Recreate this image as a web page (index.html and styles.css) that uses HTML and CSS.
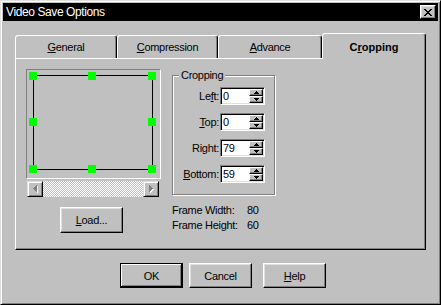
FILE: index.html
```html
<!DOCTYPE html>
<html>
<head>
<meta charset="utf-8">
<title>Video Save Options</title>
<link rel="stylesheet" href="styles.css">
</head>
<body>
<div class="window">
  <div class="titlebar">
    <span class="title">Video Save Options</span>
    <button class="close" aria-label="Close">
      <svg width="8" height="7" viewBox="0 0 8 7" shape-rendering="crispEdges"><path d="M0 0h2v1H0zM6 0h2v1H6zM1 1h2v1H1zM5 1h2v1H5zM2 2h4v1H2zM3 3h2v1H3zM2 4h4v1H2zM1 5h2v1H1zM5 5h2v1H5zM0 6h2v1H0zM6 6h2v1H6z" fill="#000"/></svg>
    </button>
  </div>
  <div class="content">
    <div class="tabs">
      <div class="tab"><u>G</u>eneral</div>
      <div class="tab"><u>C</u>ompression</div>
      <div class="tab"><u>A</u>dvance</div>
      <div class="tab active">C<u>r</u>opping</div>
    </div>
    <div class="panel">
      <div class="left-col">
        <div class="preview">
          <div class="crop"></div>
          <span class="handle h-tl"></span>
          <span class="handle h-tm"></span>
          <span class="handle h-tr"></span>
          <span class="handle h-ml"></span>
          <span class="handle h-mr"></span>
          <span class="handle h-bl"></span>
          <span class="handle h-bm"></span>
          <span class="handle h-br"></span>
        </div>
        <div class="hscroll">
          <div class="sbtn">
            <svg width="5" height="8" viewBox="0 0 5 8" shape-rendering="crispEdges"><path d="M1 4h1v1H1zM2 3h1v3H2zM3 2h1v5H3zM4 1h1v7H4z" fill="#fff"/><path d="M0 3h1v1H0zM1 2h1v3H1zM2 1h1v5H2zM3 0h1v7H3z" fill="#808080"/></svg>
          </div>
          <div class="track"></div>
          <div class="sbtn">
            <svg width="5" height="8" viewBox="0 0 5 8" shape-rendering="crispEdges"><path d="M1 1h1v7H1zM2 2h1v5H2zM3 3h1v3H3zM4 4h1v1H4z" fill="#fff"/><path d="M0 0h1v7H0zM1 1h1v5H1zM2 2h1v3H2zM3 3h1v1H3z" fill="#808080"/></svg>
          </div>
        </div>
        <button class="btn load"><u>L</u>oad...</button>
      </div>
      <div class="right-col">
        <div class="group">
          <span class="legend">Cropping</span>
          <div class="fields">
            <label class="flabel">Le<u>f</u>t:</label>
            <div class="edit"><span class="val">0</span><span class="spin"><span class="sp up"><svg width="5" height="3" viewBox="0 0 5 3" shape-rendering="crispEdges"><path d="M2 0h1v1H2zM1 1h3v1H1zM0 2h5v1H0z"/></svg></span><span class="sp dn"><svg width="5" height="3" viewBox="0 0 5 3" shape-rendering="crispEdges"><path d="M0 0h5v1H0zM1 1h3v1H1zM2 2h1v1H2z"/></svg></span></span></div>
            <label class="flabel"><u>T</u>op:</label>
            <div class="edit"><span class="val">0</span><span class="spin"><span class="sp up"><svg width="5" height="3" viewBox="0 0 5 3" shape-rendering="crispEdges"><path d="M2 0h1v1H2zM1 1h3v1H1zM0 2h5v1H0z"/></svg></span><span class="sp dn"><svg width="5" height="3" viewBox="0 0 5 3" shape-rendering="crispEdges"><path d="M0 0h5v1H0zM1 1h3v1H1zM2 2h1v1H2z"/></svg></span></span></div>
            <label class="flabel">Ri<u>g</u>ht:</label>
            <div class="edit"><span class="val">79</span><span class="spin"><span class="sp up"><svg width="5" height="3" viewBox="0 0 5 3" shape-rendering="crispEdges"><path d="M2 0h1v1H2zM1 1h3v1H1zM0 2h5v1H0z"/></svg></span><span class="sp dn"><svg width="5" height="3" viewBox="0 0 5 3" shape-rendering="crispEdges"><path d="M0 0h5v1H0zM1 1h3v1H1zM2 2h1v1H2z"/></svg></span></span></div>
            <label class="flabel"><u>B</u>ottom:</label>
            <div class="edit"><span class="val">59</span><span class="spin"><span class="sp up"><svg width="5" height="3" viewBox="0 0 5 3" shape-rendering="crispEdges"><path d="M2 0h1v1H2zM1 1h3v1H1zM0 2h5v1H0z"/></svg></span><span class="sp dn"><svg width="5" height="3" viewBox="0 0 5 3" shape-rendering="crispEdges"><path d="M0 0h5v1H0zM1 1h3v1H1zM2 2h1v1H2z"/></svg></span></span></div>
          </div>
        </div>
        <div class="info">
          <span>Frame Width:</span><span>80</span>
          <span>Frame Height:</span><span>60</span>
        </div>
      </div>
    </div>
    <div class="buttons">
      <button class="btn default">OK</button>
      <button class="btn cancel">Cancel</button>
      <button class="btn help"><u>H</u>elp</button>
    </div>
  </div>
</div>
</body>
</html>
```

FILE: styles.css
```css
* { box-sizing: border-box; }
html, body { margin: 0; padding: 0; }
body {
  width: 441px;
  height: 305px;
  overflow: hidden;
  background: #c0c0c0;
  font-family: "Liberation Sans", Arial, sans-serif;
  font-size: 11px;
  letter-spacing: -0.3px;
  color: #000;
}
u { text-decoration: underline; text-underline-offset: 1px; }

.window {
  width: 441px;
  height: 305px;
  background: #c0c0c0;
  border: 1px solid;
  border-color: #dfdfdf #000 #000 #dfdfdf;
  box-shadow: inset 1px 1px 0 #fff, inset -1px -1px 0 #808080;
  padding: 2px;
  display: flex;
  flex-direction: column;
}

.titlebar {
  height: 18px;
  background: #000;
  color: #fff;
  display: flex;
  align-items: center;
  justify-content: space-between;
  padding: 0 2px 0 3px;
}
.title { font-size: 12px; line-height: 18px; letter-spacing: -0.4px; }
.close {
  width: 16px;
  height: 14px;
  padding: 0;
  margin: 0;
  background: #c0c0c0;
  border: 1px solid;
  border-color: #fff #000 #000 #fff;
  box-shadow: inset -1px -1px 0 #808080, inset 1px 1px 0 #dfdfdf;
  display: flex;
  align-items: center;
  justify-content: center;
}
.close svg { display: block; }

.content {
  padding: 12px 12px 0 12px;
  display: flex;
  flex-direction: column;
}

/* Tabs */
.tabs {
  display: grid;
  grid-template-columns: 102px 101px 104px 104px;
  align-items: end;
  height: 25px;
}
.tab {
  height: 23px;
  border: 1px solid;
  border-bottom: none;
  border-color: #fff #000 transparent #fff;
  border-radius: 3px 3px 0 0;
  box-shadow: inset -1px 0 0 #808080;
  background: #c0c0c0;
  text-align: center;
  line-height: 13px;
  padding-top: 5px;
}
.tab.active {
  height: 26px;
  margin-bottom: -1px;
  padding-top: 7px;
  font-weight: bold;
  letter-spacing: 0;
  position: relative;
  z-index: 1;
}

/* Panel */
.panel {
  width: 411px;
  height: 192px;
  border: 1px solid;
  border-color: #fff #000 #000 #fff;
  box-shadow: inset -1px -1px 0 #808080;
  padding: 10px 0 0 10px;
  display: flex;
  gap: 11px;
}
.left-col {
  width: 135px;
  display: flex;
  flex-direction: column;
  align-items: flex-start;
}
.preview {
  width: 135px;
  height: 110px;
  border: 1px solid;
  border-color: #808080 #fff #fff #808080;
  position: relative;
}
.crop {
  position: absolute;
  left: 6px;
  top: 5px;
  width: 120px;
  height: 95px;
  border: 1px solid #000;
}
.handle {
  position: absolute;
  width: 8px;
  height: 8px;
  background: #00ff00;
}
.h-tl { left: 2px; top: 2px; }
.h-tm { left: 61px; top: 2px; }
.h-tr { left: 121px; top: 2px; }
.h-ml { left: 2px; top: 48px; }
.h-mr { left: 121px; top: 48px; }
.h-bl { left: 2px; top: 95px; }
.h-bm { left: 61px; top: 95px; }
.h-br { left: 121px; top: 95px; }

.hscroll {
  margin: 2px 0 0 1px;
  width: 132px;
  height: 16px;
  display: flex;
}
.track {
  flex: 1;
  background-color: #fff;
  background-image: repeating-conic-gradient(#c0c0c0 0 25%, #fff 0 50%);
  background-size: 2px 2px;
}
.sbtn {
  width: 16px;
  height: 16px;
  background: #c0c0c0;
  border: 1px solid;
  border-color: #dfdfdf #000 #000 #dfdfdf;
  box-shadow: inset 1px 1px 0 #fff, inset -1px -1px 0 #808080;
  display: flex;
  align-items: center;
  justify-content: center;
}
.sbtn svg { display: block; }

/* Buttons */
.btn {
  width: 63px;
  height: 25px;
  padding: 0;
  margin: 0;
  font-family: inherit;
  font-size: 11px;
  letter-spacing: -0.3px;
  color: #000;
  background: #c0c0c0;
  border: 1px solid;
  border-color: #fff #000 #000 #fff;
  box-shadow: inset -1px -1px 0 #808080, inset 1px 1px 0 #dfdfdf;
}
.btn.load { height: 26px; margin: 10px 0 0 34px; }
.btn.default {
  border: 1px solid #000;
  box-shadow: inset -1px -1px 0 #000, inset 1px 1px 0 #fff, inset -2px -2px 0 #808080;
}
.buttons {
  display: flex;
  margin-top: 13px;
  padding-left: 105px;
}
.btn.cancel { margin-left: 6px; }
.btn.help { margin-left: 11px; }

/* Right column */
.right-col {
  display: flex;
  flex-direction: column;
}
.group {
  margin-top: 6px;
  width: 103px;
  height: 120px;
  border: 1px solid #808080;
  box-shadow: inset 1px 1px 0 #fff, 1px 1px 0 #fff;
}
.legend {
  display: block;
  width: fit-content;
  margin: -7px 0 0 6px;
  padding: 0 2px;
  background: #c0c0c0;
  line-height: 13px;
}
.fields {
  margin-top: 5px;
  display: grid;
  grid-template-columns: 47px 45px;
  row-gap: 8px;
  align-items: center;
}
.flabel {
  text-align: right;
  padding-right: 1px;
  line-height: 13px;
}
.edit {
  height: 18px;
  display: flex;
  background: #fff;
  border: 1px solid;
  border-color: #808080 #fff #fff #808080;
  box-shadow: inset 1px 1px 0 #000, inset -1px -1px 0 #dfdfdf;
}
.val {
  flex: 1;
  padding: 1px 0 0 2px;
  line-height: 15px;
}
.spin {
  width: 15px;
  display: flex;
  flex-direction: column;
  padding: 1px 1px 1px 0;
}
.sp {
  flex: 1;
  background: #c0c0c0;
  border: 1px solid;
  border-color: #fff #000 #000 #fff;
  box-shadow: inset -1px -1px 0 #808080;
  display: flex;
  align-items: center;
  justify-content: center;
}
.sp svg { display: block; fill: #000; }

.info {
  margin-top: 8px;
  display: grid;
  grid-template-columns: 75px auto;
  line-height: 15px;
}
```
